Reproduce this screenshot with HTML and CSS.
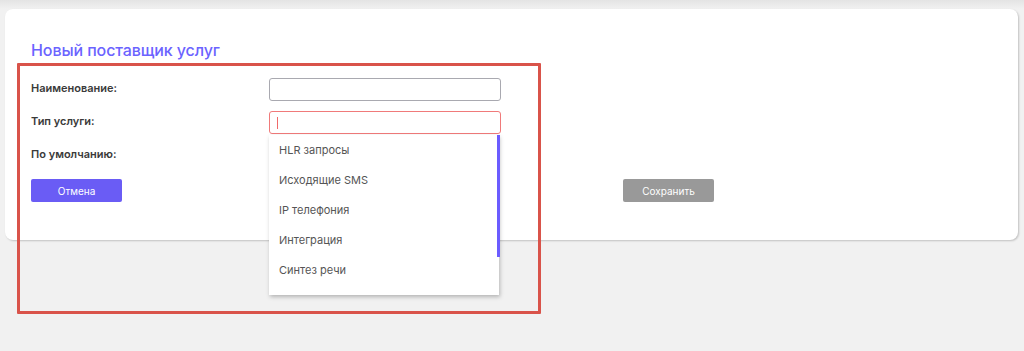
FILE: index.html
```html
<!DOCTYPE html>
<html lang="ru">
<head>
<meta charset="utf-8">
<link rel="stylesheet" href="styles.css">
</head>
<body>
<div class="page">
  <div class="card">
    <h1 class="title">Новый поставщик услуг</h1>
    <div class="form">
      <div class="row">
        <label class="label">Наименование:</label>
        <div class="field"><div class="input"></div></div>
      </div>
      <div class="row">
        <label class="label">Тип услуги:</label>
        <div class="field">
          <div class="input input-error"><span class="caret"></span></div>
          <div class="dropdown">
            <div class="item">HLR запросы</div>
            <div class="item">Исходящие SMS</div>
            <div class="item">IP телефония</div>
            <div class="item">Интеграция</div>
            <div class="item">Синтез речи</div>
            <div class="scrollbar"></div>
          </div>
        </div>
      </div>
      <div class="row">
        <label class="label">По умолчанию:</label>
      </div>
      <div class="buttons">
        <button class="btn btn-cancel">Отмена</button>
        <button class="btn btn-save">Сохранить</button>
      </div>
    </div>
  </div>
  <div class="highlight"></div>
</div>
</body>
</html>
```

FILE: styles.css
```css
* { box-sizing: border-box; }
html, body { margin: 0; padding: 0; }
body {
  width: 1024px;
  height: 351px;
  overflow: hidden;
  background: linear-gradient(#e4e4e4 0px, #f1f1f1 9px, #f1f1f1 100%);
  font-family: "Inter", "Noto Sans", sans-serif;
  color: #333;
}
.page {
  position: relative;
  padding: 9px 6px 0 5px;
}
.card {
  background: #fff;
  border-radius: 8px;
  height: 231px;
  box-shadow: 1px 1px 2px rgba(0,0,0,0.2);
  padding: 31px 0 0 26px;
}
.title {
  margin: 0;
  font-size: 16px;
  font-weight: 500;
  color: #6b63ff;
  line-height: 20px;
  letter-spacing: -0.1px;
}
.form {
  margin-top: 18px;
}
.row {
  display: flex;
  align-items: flex-start;
  height: 33px;
}
.label {
  width: 238px;
  font-size: 11px;
  font-weight: 600;
  color: #3a3a3a;
  line-height: 20px;
}
.field {
  position: relative;
  width: 232px;
}
.input {
  height: 23px;
  border: 1px solid #a9a9b0;
  border-radius: 3px;
  background: #fff;
  position: relative;
}
.input-error {
  border-color: #f07a7a;
}
.caret {
  position: absolute;
  left: 7px;
  top: 5px;
  width: 1px;
  height: 12px;
  background: #f06a6a;
}
.dropdown {
  position: absolute;
  left: 0;
  top: 24px;
  width: 230px;
  height: 160px;
  background: #fff;
  box-shadow: 1px 2px 4px rgba(0,0,0,0.25);
  padding-top: 3px;
  z-index: 2;
}
.item {
  height: 30px;
  line-height: 24px;
  padding-left: 10px;
  font-size: 11px;
  color: #555;
}
.scrollbar {
  position: absolute;
  right: -1px;
  top: 0;
  width: 3px;
  height: 122px;
  background: #6b5cff;
}
.buttons {
  display: flex;
  gap: 501px;
  margin-top: 2px;
}
.btn {
  width: 91px;
  height: 23px;
  border: none;
  border-radius: 2px;
  font-family: inherit;
  font-size: 10px;
  color: #fff;
  padding: 0;
}
.btn-cancel { background: #6a5cf5; }
.btn-save { background: #999; }
.highlight {
  position: absolute;
  left: 17px;
  top: 63px;
  width: 524px;
  height: 251px;
  border: 3px solid #d9534a;
  border-radius: 1px;
  z-index: 3;
  pointer-events: none;
}
```
